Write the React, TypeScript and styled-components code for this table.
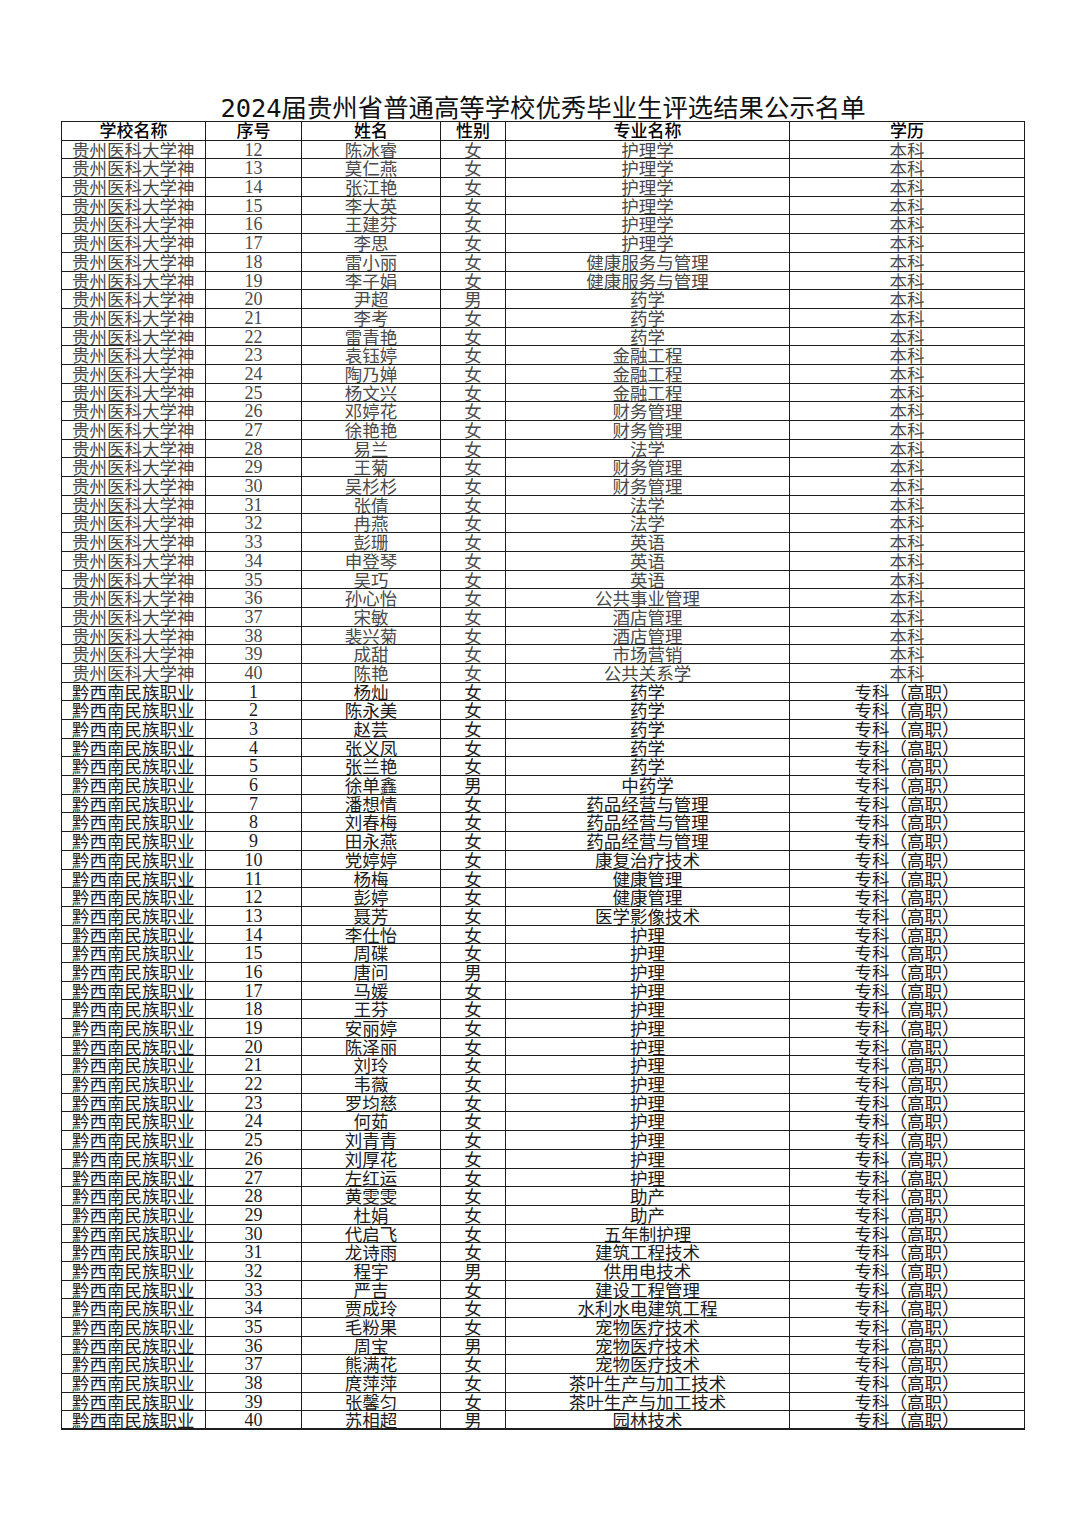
import React from "react";
import styled, { createGlobalStyle } from "styled-components";

const Global = createGlobalStyle`
  html, body { margin: 0; padding: 0; background: #ffffff; }
  body { font-family: "Liberation Serif", "Noto Sans CJK SC", serif; }
`;

const Page = styled.div`
  width: 1080px;
  min-height: 1527px;
  background: #fff;
  padding: 95px 0 0 61px;
  box-sizing: border-box;
`;

const Title = styled.h1`
  width: 964px;
  margin: 0;
  height: 26px;
  line-height: 26px;
  text-align: center;
  font-family: "DejaVu Sans Mono", "Noto Sans CJK SC", sans-serif;
  font-size: 25.4px;
  font-weight: 400;
  color: #111;
  white-space: nowrap;
`;

const Sheet = styled.div`
  width: 964px;
  display: grid;
  grid-template-columns: 144px 96px 139px 65px 284px 235px;
  grid-auto-rows: 18.7px;
  border-top: 1px solid #1e1e1e;
  border-left: 1px solid #1e1e1e;
  box-sizing: border-box;
`;

const Cell = styled.div<{ $head?: boolean; $tone?: "gray" | "dark"; $last?: boolean }>`
  box-sizing: border-box;
  border-right: 1px solid #1e1e1e;
  border-bottom: ${(p) => (p.$last ? "2px" : "1px")} solid #1e1e1e;
  overflow: hidden;
  white-space: nowrap;
  text-align: center;
  font-family: "Liberation Serif", "Noto Sans CJK SC", serif;
  font-size: ${(p) => (p.$head ? "17px" : "17.5px")};
  font-weight: ${(p) => (p.$head ? 500 : 400)};
  line-height: 18px;
  padding-top: 1px;
  color: ${(p) => (p.$head ? "#000" : p.$tone === "gray" ? "#4a4a4a" : "#1c1c1c")};
`;

const SchoolCell = styled(Cell)`
  text-align: left;
  padding-left: 10px;
`;

const NumberCell = styled(Cell)`
  font-size: 18px;
  line-height: 18px;
  padding-top: 0;
`;

type Row = [number, string, string, string];

const g1: Row[] = [
  [12, "陈冰睿", "女", "护理学"],
  [13, "莫仁燕", "女", "护理学"],
  [14, "张江艳", "女", "护理学"],
  [15, "李大英", "女", "护理学"],
  [16, "王建芬", "女", "护理学"],
  [17, "李思", "女", "护理学"],
  [18, "雷小丽", "女", "健康服务与管理"],
  [19, "李子娟", "女", "健康服务与管理"],
  [20, "尹超", "男", "药学"],
  [21, "李考", "女", "药学"],
  [22, "雷青艳", "女", "药学"],
  [23, "袁钰婷", "女", "金融工程"],
  [24, "陶乃婵", "女", "金融工程"],
  [25, "杨文兴", "女", "金融工程"],
  [26, "邓婷花", "女", "财务管理"],
  [27, "徐艳艳", "女", "财务管理"],
  [28, "易兰", "女", "法学"],
  [29, "王菊", "女", "财务管理"],
  [30, "吴杉杉", "女", "财务管理"],
  [31, "张倩", "女", "法学"],
  [32, "冉燕", "女", "法学"],
  [33, "彭珊", "女", "英语"],
  [34, "申登琴", "女", "英语"],
  [35, "吴巧", "女", "英语"],
  [36, "孙心怡", "女", "公共事业管理"],
  [37, "宋敏", "女", "酒店管理"],
  [38, "裴兴菊", "女", "酒店管理"],
  [39, "成甜", "女", "市场营销"],
  [40, "陈艳", "女", "公共关系学"],
];

const g2: Row[] = [
  [1, "杨灿", "女", "药学"],
  [2, "陈永美", "女", "药学"],
  [3, "赵芸", "女", "药学"],
  [4, "张义凤", "女", "药学"],
  [5, "张兰艳", "女", "药学"],
  [6, "徐单鑫", "男", "中药学"],
  [7, "潘想情", "女", "药品经营与管理"],
  [8, "刘春梅", "女", "药品经营与管理"],
  [9, "田永燕", "女", "药品经营与管理"],
  [10, "党婷婷", "女", "康复治疗技术"],
  [11, "杨梅", "女", "健康管理"],
  [12, "彭婷", "女", "健康管理"],
  [13, "聂芳", "女", "医学影像技术"],
  [14, "李仕怡", "女", "护理"],
  [15, "周碟", "女", "护理"],
  [16, "唐问", "男", "护理"],
  [17, "马媛", "女", "护理"],
  [18, "王芬", "女", "护理"],
  [19, "安丽婷", "女", "护理"],
  [20, "陈泽丽", "女", "护理"],
  [21, "刘玲", "女", "护理"],
  [22, "韦薇", "女", "护理"],
  [23, "罗均慈", "女", "护理"],
  [24, "何茹", "女", "护理"],
  [25, "刘青青", "女", "护理"],
  [26, "刘厚花", "女", "护理"],
  [27, "左红运", "女", "护理"],
  [28, "黄雯雯", "女", "助产"],
  [29, "杜娟", "女", "助产"],
  [30, "代启飞", "女", "五年制护理"],
  [31, "龙诗雨", "女", "建筑工程技术"],
  [32, "程宇", "男", "供用电技术"],
  [33, "严吉", "女", "建设工程管理"],
  [34, "贾成玲", "女", "水利水电建筑工程"],
  [35, "毛粉果", "女", "宠物医疗技术"],
  [36, "周宝", "男", "宠物医疗技术"],
  [37, "熊满花", "女", "宠物医疗技术"],
  [38, "庹萍萍", "女", "茶叶生产与加工技术"],
  [39, "张馨匀", "女", "茶叶生产与加工技术"],
  [40, "苏相超", "男", "园林技术"],
];

type Full = { school: string; no: number; name: string; sex: string; major: string; edu: string; tone: "gray" | "dark" };

const rows: Full[] = [
  ...g1.map(([no, name, sex, major]) => ({ school: "贵州医科大学神", no, name, sex, major, edu: "本科", tone: "gray" as const })),
  ...g2.map(([no, name, sex, major]) => ({ school: "黔西南民族职业", no, name, sex, major, edu: "专科（高职）", tone: "dark" as const })),
];

const heads = ["学校名称", "序号", "姓名", "性别", "专业名称", "学历"];

export default function App() {
  return (
    <>
      <Global />
      <Page>
        <Title>2024届贵州省普通高等学校优秀毕业生评选结果公示名单</Title>
        <Sheet>
          {heads.map((h) => (
            <Cell key={h} $head>
              {h}
            </Cell>
          ))}
          {rows.map((r, i) => {
            const last = i === rows.length - 1;
            return (
              <React.Fragment key={i}>
                <SchoolCell $tone={r.tone} $last={last}>{r.school}</SchoolCell>
                <NumberCell $tone={r.tone} $last={last}>{r.no}</NumberCell>
                <Cell $tone={r.tone} $last={last}>{r.name}</Cell>
                <Cell $tone={r.tone} $last={last}>{r.sex}</Cell>
                <Cell $tone={r.tone} $last={last}>{r.major}</Cell>
                <Cell $tone={r.tone} $last={last}>{r.edu}</Cell>
              </React.Fragment>
            );
          })}
        </Sheet>
      </Page>
    </>
  );
}
